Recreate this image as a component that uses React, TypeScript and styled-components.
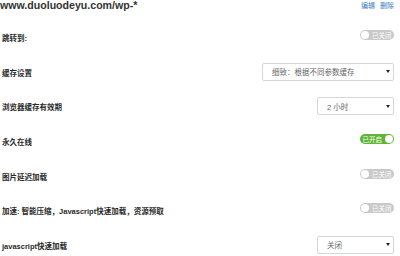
import React from "react";
import styled, { createGlobalStyle } from "styled-components";

const Global = createGlobalStyle`
  html, body { margin: 0; padding: 0; background: #fff; }
  body { font-family: "Liberation Sans", "Noto Sans CJK SC", sans-serif; }
`;

const Page = styled.div`
  width: 400px;
  height: 256px;
  box-sizing: border-box;
  padding: 0 6px 0 2px;
  overflow: hidden;
`;

const Header = styled.div`
  display: flex;
  justify-content: space-between;
  align-items: flex-start;
  height: 20px;
`;

const Title = styled.div`
  margin-left: -2px;
  font-family: "Liberation Sans", "Noto Sans CJK SC", sans-serif;
  font-weight: bold;
  font-size: 10.6px;
  line-height: 11px;
  color: #333;
`;

const Links = styled.div`
  display: flex;
  gap: 5px;
  padding-top: 1px;
`;

const LinkText = styled.span`
  font-family: "Noto Sans CJK SC", sans-serif;
  font-size: 7px;
  line-height: 9px;
  color: #3a7cc0;
`;

const Row = styled.div`
  display: flex;
  justify-content: space-between;
  align-items: center;
  height: 34.7px;
`;

const Label = styled.div`
  font-family: "Liberation Sans", "Noto Sans CJK SC", sans-serif;
  font-size: 7.5px;
  font-weight: 600;
  color: #2a2a2a;
  white-space: nowrap;
`;

const SwitchBox = styled.div<{ $on: boolean }>`
  width: 34px;
  height: 10px;
  border-radius: 5px;
  background: ${(p) => (p.$on ? "#5fb535" : "#c9c9c9")};
  display: flex;
  flex-direction: ${(p) => (p.$on ? "row-reverse" : "row")};
  align-items: center;
  gap: 3px;
  padding: 0 1px;
  box-sizing: border-box;
  margin-bottom: 5px;
`;

const Knob = styled.div`
  width: 8px;
  height: 8px;
  border-radius: 50%;
  background: #fff;
  flex: none;
`;

const SwitchText = styled.span`
  font-family: "Noto Sans CJK SC", sans-serif;
  font-size: 6.5px;
  line-height: 8px;
  color: #fff;
`;

const SelectBox = styled.div<{ $w: number }>`
  width: ${(p) => p.$w}px;
  height: 18px;
  box-sizing: border-box;
  border: 1px solid #d6d6d6;
  border-radius: 2px;
  display: flex;
  align-items: center;
  justify-content: space-between;
  padding: 0 3px 0 9px;
  margin-bottom: 1px;
`;

const SelectText = styled.span`
  font-family: "Liberation Sans", "Noto Sans CJK SC", sans-serif;
  font-size: 7.5px;
  color: #666;
`;

const Caret = styled.span`
  width: 0;
  height: 0;
  border-left: 2px solid transparent;
  border-right: 2px solid transparent;
  border-top: 3px solid #222;
`;

const Switch = ({ on }: { on: boolean }) => (
  <SwitchBox $on={on}>
    <Knob />
    <SwitchText>{on ? "已开启" : "已关闭"}</SwitchText>
  </SwitchBox>
);

const Select = ({ w, text }: { w: number; text: string }) => (
  <SelectBox $w={w}>
    <SelectText>{text}</SelectText>
    <Caret />
  </SelectBox>
);

export default function App() {
  return (
    <Page>
      <Global />
      <Header>
        <Title>www.duoluodeyu.com/wp-*</Title>
        <Links>
          <LinkText>编辑</LinkText>
          <LinkText>删除</LinkText>
        </Links>
      </Header>
      <Row>
        <Label>跳转到:</Label>
        <Switch on={false} />
      </Row>
      <Row>
        <Label>缓存设置</Label>
        <Select w={132} text="细致：根据不同参数缓存" />
      </Row>
      <Row>
        <Label>浏览器缓存有效期</Label>
        <Select w={77} text="2 小时" />
      </Row>
      <Row>
        <Label>永久在线</Label>
        <Switch on={true} />
      </Row>
      <Row>
        <Label>图片延迟加载</Label>
        <Switch on={false} />
      </Row>
      <Row>
        <Label>加速: 智能压缩，Javascript快速加载，资源预取</Label>
        <Switch on={false} />
      </Row>
      <Row>
        <Label>javascript快速加载</Label>
        <Select w={77} text="关闭" />
      </Row>
    </Page>
  );
}
